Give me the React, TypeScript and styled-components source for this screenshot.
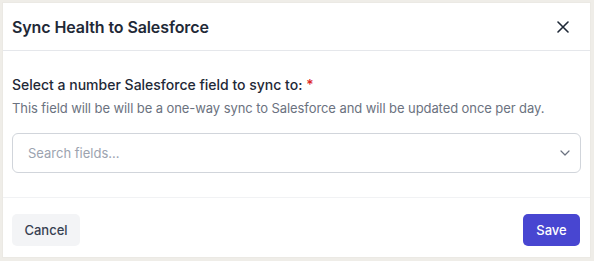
import * as React from 'react';
import styled, { createGlobalStyle } from 'styled-components';

const GlobalStyle = createGlobalStyle`
  html, body {
    margin: 0;
    padding: 0;
    background: #efede8;
    font-family: Inter, "Noto Sans", "Liberation Sans", sans-serif;
  }
  * { box-sizing: border-box; }
`;

const Dialog = styled.div`
  width: 589px;
  height: 256px;
  margin: 2px;
  background: #ffffff;
  border: 1px solid #ebe9e4;
  display: flex;
  flex-direction: column;
`;

const Header = styled.div`
  height: 48px;
  padding: 0 9px;
  display: flex;
  align-items: center;
  justify-content: space-between;
  border-bottom: 1px solid #e5e7eb;
`;

const Title = styled.h2`
  margin: 0;
  font-size: 16px;
  font-weight: 600;
  color: #1f2937;
  letter-spacing: -0.1px;
`;

const CloseButton = styled.button`
  width: 24px;
  height: 24px;
  margin-right: 6px;
  padding: 0;
  border: none;
  background: transparent;
  display: flex;
  align-items: center;
  justify-content: center;
  color: #1f2937;
`;

const Body = styled.div`
  padding: 24px 9px 24px;
  border-bottom: 1px solid #f1f2f4;
`;

const Label = styled.div`
  font-size: 14px;
  line-height: 20px;
  font-weight: 500;
  color: #1f2937;
`;

const Required = styled.span`
  color: #dc2626;
`;

const Description = styled.p`
  margin: 3px 0 15px;
  font-size: 13px;
  line-height: 20px;
  letter-spacing: -0.08px;
  color: #6b7280;
`;

const SelectBox = styled.div`
  height: 40px;
  border: 1px solid #d1d5db;
  border-radius: 6px;
  padding: 0 10px 0 15px;
  display: flex;
  align-items: center;
  justify-content: space-between;
`;

const Placeholder = styled.span`
  font-size: 13px;
  color: #9ca3af;
`;

const Footer = styled.div`
  flex: 1;
  padding: 16px 10px 0 9px;
  display: flex;
  justify-content: space-between;
  align-items: flex-start;
`;

const Button = styled.button<{ $primary?: boolean }>`
  height: 32px;
  width: ${({ $primary }) => ($primary ? '57px' : '68px')};
  padding: 0;
  border: none;
  border-radius: 5px;
  font-family: inherit;
  font-size: 13px;
  font-weight: 500;
  background: ${({ $primary }) => ($primary ? '#4846d1' : '#f3f4f6')};
  color: ${({ $primary }) => ($primary ? '#ffffff' : '#374151')};
`;

const App: React.FunctionComponent = () => {
  return (
    <>
      <GlobalStyle />
      <Dialog>
        <Header>
          <Title>Sync Health to Salesforce</Title>
          <CloseButton aria-label="Close">
            <svg width="12" height="12" viewBox="0 0 12 12" fill="none" stroke="currentColor" strokeWidth="1.6" strokeLinecap="round">
              <path d="M1 1 L11 11 M11 1 L1 11" />
            </svg>
          </CloseButton>
        </Header>
        <Body>
          <Label>
            Select a number Salesforce field to sync to: <Required>*</Required>
          </Label>
          <Description>
            This field will be will be a one-way sync to Salesforce and will be updated once per day.
          </Description>
          <SelectBox>
            <Placeholder>Search fields...</Placeholder>
            <svg width="10" height="6" viewBox="0 0 10 6" fill="none" stroke="#6b7280" strokeWidth="1.2" strokeLinecap="round" strokeLinejoin="round">
              <path d="M1 1 L5 5 L9 1" />
            </svg>
          </SelectBox>
        </Body>
        <Footer>
          <Button>Cancel</Button>
          <Button $primary>Save</Button>
        </Footer>
      </Dialog>
    </>
  );
};

export default App;
